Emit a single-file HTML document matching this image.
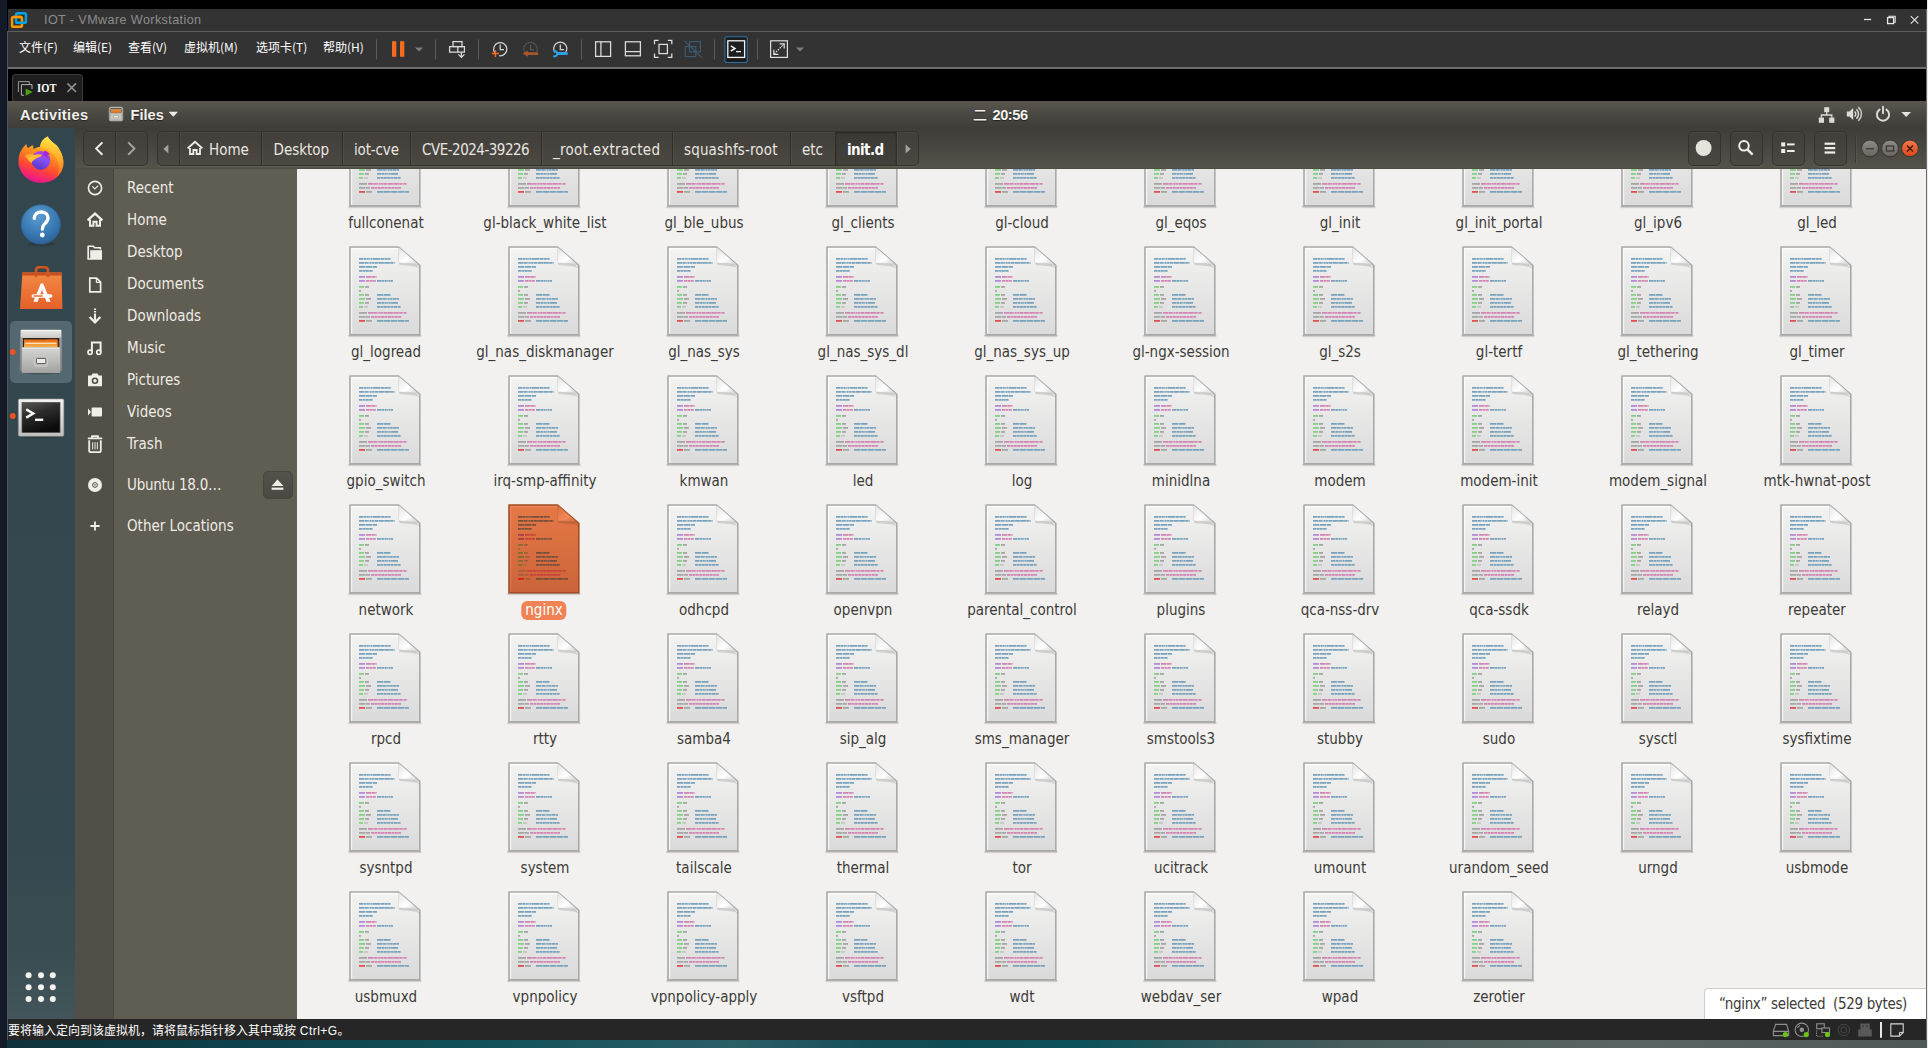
<!DOCTYPE html>
<html lang="zh-CN">
<head>
<meta charset="utf-8">
<title>IOT - VMware Workstation</title>
<style>
*{box-sizing:border-box;margin:0;padding:0}
html,body{width:1928px;height:1048px;overflow:hidden;background:#000}
body{position:relative;font-family:"DejaVu Sans Condensed","Liberation Sans","Noto Sans CJK SC",sans-serif;font-size:15px;color:#3c3b37}
.abs{position:absolute}
#lstrip{left:0;top:0;width:7px;height:1048px;background:#141a27}
#lborder{left:7px;top:31px;width:1px;height:1009px;background:#555}
#rcol1{left:1926px;top:9px;width:1px;height:1031px;background:#6b6b6b}
#rcol2{left:1927px;top:0;width:1px;height:1048px;background:#e9e9e9}
#wall{left:7px;top:1040px;width:1921px;height:8px;background:linear-gradient(90deg,#10323a 0%,#0c3f49 10%,#135059 25%,#2a5f68 38%,#164e57 45%,#0e4a53 50%,#0b525a 56%,#29565a 62%,#485b5b 70%,#5a6563 85%,#4f5856 100%)}
/* vmware chrome */
#vtitle{left:8px;top:9px;width:1918px;height:22px;background:#333}
#vtitle .t{position:absolute;left:36px;top:0;line-height:22px;font-family:"Liberation Sans","Noto Sans CJK SC",sans-serif;font-size:12.6px;color:#8c8c8c;letter-spacing:.4px}
#vline1{left:8px;top:31px;width:1918px;height:1px;background:#5e5e5e}
#vmenu{left:8px;top:32px;width:1918px;height:35px;background:#333}
#vline2{left:7px;top:67px;width:1919px;height:2px;background:#6d6d6d}
.mi{position:absolute;top:0;line-height:30.5px;font-family:"Noto Sans CJK SC","Liberation Sans",sans-serif;font-size:12px;color:#fff;white-space:nowrap}
.vsep{position:absolute;top:7px;width:1px;height:21px;background:#5a5a5a}
#vtab{left:12px;top:74px;width:71px;height:28px;background:#1e1e1e;border:1px solid #3b3b3b;border-bottom:none;border-radius:4px 4px 0 0}
#vtab .n{position:absolute;left:24px;top:5px;transform:scaleX(.84);transform-origin:0 0;font-family:"Liberation Serif","Noto Serif CJK SC",serif;font-weight:bold;font-size:12.5px;line-height:16px;color:#fff;letter-spacing:.2px}
#vstatus{left:8px;top:1019px;width:1918px;height:21px;background:#262626}
#vstatus .t{position:absolute;left:0;top:0;line-height:24px;font-family:"Liberation Sans","Noto Sans CJK SC",sans-serif;font-size:12px;color:#fff;white-space:nowrap}
/* guest */
#guest{left:8px;top:101px;width:1918px;height:918px;background:#f2f1f0;overflow:hidden}
#gtop{left:0;top:0;width:1918px;height:27px;background:linear-gradient(#5a574f,#4a4842 50%,#3f3d38)}
#gtop .b{position:absolute;top:0;line-height:29px;font-family:'Liberation Sans','Noto Sans CJK SC',sans-serif;font-weight:bold;font-size:14.6px;letter-spacing:.35px;color:#f2f1ee;white-space:nowrap;text-shadow:0 1px 1px rgba(0,0,0,.5)}
#dock{left:0;top:27px;width:67px;height:891px;background:linear-gradient(#33464e 0,#34484f 80%,#394c52 92%,#43555a 100%)}
#hbar{left:67px;top:27px;width:1851px;height:41px;z-index:2;background:linear-gradient(#3f3d38,#46443e 35%,#55524a 97%,#4b4942)}
.hbtn{position:absolute;top:3px;height:35px;border:1px solid #33322d;border-radius:5px;background:linear-gradient(#423f3b,#4b4842);box-shadow:inset 0 1px 0 rgba(255,255,255,.05),0 1px 0 rgba(255,255,255,.07)}
.pb{position:absolute;top:0;height:33px;line-height:36px;color:#e8e6e1;font-size:15px;white-space:nowrap;border-left:1px solid #2f2e2a;box-shadow:inset 1px 0 0 rgba(255,255,255,.05)}
.pb span{position:absolute;top:0}
#sideic{left:67px;top:67px;width:39px;height:851px;background:#514f48;border-right:1px solid #46453e}
#side{left:106px;top:67px;width:183px;height:851px;background:#605d52}
#sideborder{left:289px;top:67px;width:1px;height:851px;background:#c6c5c1}
.si{position:absolute;left:13px;height:20px;line-height:23px;color:#edebe6;font-size:15px;white-space:nowrap}
.sic{position:absolute;left:10px;width:18px;height:18px}
#content{position:absolute;left:289px;top:67px;width:1629px;height:851px;background:#f2f1f0;overflow:hidden}
.f{position:absolute;width:150px;height:125px;text-align:center}
.f .ic{position:absolute;left:35px;top:-2px}
.f .lb{position:absolute;left:1px;width:150px;top:95px;line-height:22px;font-size:15px;color:#3c3b37;white-space:nowrap}
.f.sel .lb{left:auto;width:auto}
.f.sel .lb{left:50%;transform:translateX(-50%);background:#ef8355;color:#fff;border-radius:6px;padding:0 4px;height:19px;line-height:19px;top:96.5px}
#floatbar{position:absolute;right:0;bottom:0;width:222px;height:31px;background:#fff;border:1px solid #cfcdc8;border-right:none;border-bottom:none;border-radius:4px 0 0 0;line-height:30px;padding-left:14px;font-size:15px;color:#3c3b37;white-space:nowrap;letter-spacing:-.35px}
</style>
</head>
<body>
<svg width="0" height="0" style="position:absolute"><defs><symbol id="doc" viewBox="0 0 80 98">
<linearGradient id="docg" x1="0" y1="0" x2="0" y2="1"><stop offset="0" stop-color="#f3f3f2"/><stop offset="1" stop-color="#dadada"/></linearGradient>
<linearGradient id="docf" x1="0" y1="0" x2="1" y2="1"><stop offset="0" stop-color="#e4e4e4"/><stop offset=".55" stop-color="#ffffff"/><stop offset="1" stop-color="#c9c9c9"/></linearGradient>
<linearGradient id="docs" x1="0" y1="0" x2="0" y2="1"><stop offset="0" stop-color="#000" stop-opacity=".32"/><stop offset="1" stop-color="#000" stop-opacity="0"/></linearGradient>
<rect x="3.4" y="90.8" width="73" height="3" rx="1.2" fill="url(#docs)"/>
<path d="M5 3H53.6L74.8 21.4V90.8H5Z" fill="url(#docg)" stroke="#a9a9a9" stroke-width="1.6" stroke-linejoin="round"/>
<path d="M6 4H53.2V5.4H7.2V89.8H6Z" fill="#fff" opacity=".7"/>
<path d="M53.8 3.6C53.6 9 53.6 14 53.5 17.4C53.5 19 54.2 19.6 55.6 19.6C62 19.6 69 20.4 74.6 22.6Z" fill="#000" opacity=".13" transform="translate(.5 1.7)"/>
<path d="M53.8 3.2C53.6 9 53.6 14 53.4 17C53.4 18.6 54.2 19 55.6 19C62 19 69 19.8 74.6 21.4Z" fill="url(#docf)" stroke="#a9a9a9" stroke-width=".5" stroke-opacity=".5"/>
<path d="M14 14.9H46" stroke="#78a2bd" stroke-width="1.8" stroke-dasharray="4 .4 3 .4 2 .4 1 .4 2 .4 7 .4"/><path d="M14 18.9H50" stroke="#78a2bd" stroke-width="1.8" stroke-dasharray="5.5 .4 3 .4 1 .4 2 .4 2 .4 4 .4 5 .4"/><path d="M14 22.9H32" stroke="#78a2bd" stroke-width="1.8" stroke-dasharray="6 .5 7 .5"/><path d="M14 26.9H28" stroke="#78a2bd" stroke-width="1.8" stroke-dasharray="3 .4 3 .4 3 .4"/><path d="M14 32.9H20" stroke="#b38bd8" stroke-width="1.8" stroke-dasharray="none"/><path d="M21 32.9H32" stroke="#d484b4" stroke-width="1.8" stroke-dasharray="5.5 .4 3 .4 1 .4 2 .4 2 .4 4 .4 5 .4"/><path d="M14 36.9H20" stroke="#b38bd8" stroke-width="1.8" stroke-dasharray="none"/><path d="M21 36.9H31" stroke="#d484b4" stroke-width="1.8" stroke-dasharray="3 .4 3 .4 3 .4"/><path d="M32 36.9H48" stroke="#78a2bd" stroke-width="1.8" stroke-dasharray="4 .4 3 .4 2 .4 1 .4 2 .4 7 .4"/><path d="M14 42.9H19" stroke="#84d084" stroke-width="1.8" stroke-dasharray="none"/><path d="M20 42.9H24" stroke="#a6a6a6" stroke-width="1.8" stroke-dasharray="none"/><path d="M14 46.9H16" stroke="#a6a6a6" stroke-width="1.8" stroke-dasharray="none"/><path d="M14 50.9H19" stroke="#84d084" stroke-width="1.8" stroke-dasharray="none"/><path d="M20 50.9H24" stroke="#a6a6a6" stroke-width="1.8" stroke-dasharray="none"/><path d="M32 50.9H46" stroke="#78a2bd" stroke-width="1.8" stroke-dasharray="6 .5 7 .5"/><path d="M14 54.9H20" stroke="#84d084" stroke-width="1.8" stroke-dasharray="none"/><path d="M21 54.9H26" stroke="#a6a6a6" stroke-width="1.8" stroke-dasharray="none"/><path d="M32 54.9H54" stroke="#78a2bd" stroke-width="1.8" stroke-dasharray="5.5 .4 3 .4 1 .4 2 .4 2 .4 4 .4 5 .4"/><path d="M14 58.9H19" stroke="#84d084" stroke-width="1.8" stroke-dasharray="none"/><path d="M20 58.9H24" stroke="#a6a6a6" stroke-width="1.8" stroke-dasharray="none"/><path d="M32 58.9H53" stroke="#78a2bd" stroke-width="1.8" stroke-dasharray="4 .4 3 .4 2 .4 1 .4 2 .4 7 .4"/><path d="M14 62.9H18" stroke="#84d084" stroke-width="1.8" stroke-dasharray="none"/><path d="M19 62.9H23" stroke="#c6c6c6" stroke-width="1.8" stroke-dasharray="none"/><path d="M32 62.9H56" stroke="#78a2bd" stroke-width="1.8" stroke-dasharray="3 .4 3 .4 3 .4"/><path d="M14 68.9H22" stroke="#a6a6a6" stroke-width="1.8" stroke-dasharray="none"/><path d="M23 68.9H62" stroke="#d484b4" stroke-width="1.8" stroke-dasharray="5.5 .4 3 .4 1 .4 2 .4 2 .4 4 .4 5 .4"/><path d="M14 72.9H25" stroke="#a6a6a6" stroke-width="1.8" stroke-dasharray="6 .5 7 .5"/><path d="M26 72.9H56" stroke="#d484b4" stroke-width="1.8" stroke-dasharray="3 .4 3 .4 3 .4"/><path d="M14 76.9H20" stroke="#de5252" stroke-width="1.8" stroke-dasharray="none"/><path d="M21 76.9H27" stroke="#a6a6a6" stroke-width="1.8" stroke-dasharray="none"/><path d="M32 76.9H64" stroke="#78a2bd" stroke-width="1.8" stroke-dasharray="6 .5 7 .5"/>
</symbol><symbol id="docsel" viewBox="0 0 80 98">
<linearGradient id="docselg" x1="0" y1="0" x2="0" y2="1"><stop offset="0" stop-color="#e67846"/><stop offset="1" stop-color="#cb643a"/></linearGradient>
<linearGradient id="docself" x1="0" y1="0" x2="1" y2="1"><stop offset="0" stop-color="#d96a3a"/><stop offset=".55" stop-color="#f08a5a"/><stop offset="1" stop-color="#c25a2e"/></linearGradient>
<linearGradient id="docsels" x1="0" y1="0" x2="0" y2="1"><stop offset="0" stop-color="#000" stop-opacity=".32"/><stop offset="1" stop-color="#000" stop-opacity="0"/></linearGradient>
<rect x="3.4" y="90.8" width="73" height="3" rx="1.2" fill="url(#docsels)"/>
<path d="M5 3H53.6L74.8 21.4V90.8H5Z" fill="url(#docselg)" stroke="#a54e25" stroke-width="1.6" stroke-linejoin="round"/>
<path d="M6 4H53.2V5.4H7.2V89.8H6Z" fill="#fff" opacity=".12"/>
<path d="M53.8 3.6C53.6 9 53.6 14 53.5 17.4C53.5 19 54.2 19.6 55.6 19.6C62 19.6 69 20.4 74.6 22.6Z" fill="#000" opacity=".13" transform="translate(.5 1.7)"/>
<path d="M53.8 3.2C53.6 9 53.6 14 53.4 17C53.4 18.6 54.2 19 55.6 19C62 19 69 19.8 74.6 21.4Z" fill="url(#docself)" stroke="#a54e25" stroke-width=".5" stroke-opacity=".5"/>
<path d="M14 14.9H46" stroke="#76503a" stroke-width="1.8" stroke-dasharray="4 .4 3 .4 2 .4 1 .4 2 .4 7 .4"/><path d="M14 18.9H50" stroke="#76503a" stroke-width="1.8" stroke-dasharray="5.5 .4 3 .4 1 .4 2 .4 2 .4 4 .4 5 .4"/><path d="M14 22.9H32" stroke="#76503a" stroke-width="1.8" stroke-dasharray="6 .5 7 .5"/><path d="M14 26.9H28" stroke="#76503a" stroke-width="1.8" stroke-dasharray="3 .4 3 .4 3 .4"/><path d="M14 32.9H20" stroke="#a6404c" stroke-width="1.8" stroke-dasharray="none"/><path d="M21 32.9H32" stroke="#c9423a" stroke-width="1.8" stroke-dasharray="5.5 .4 3 .4 1 .4 2 .4 2 .4 4 .4 5 .4"/><path d="M14 36.9H20" stroke="#a6404c" stroke-width="1.8" stroke-dasharray="none"/><path d="M21 36.9H31" stroke="#c9423a" stroke-width="1.8" stroke-dasharray="3 .4 3 .4 3 .4"/><path d="M32 36.9H48" stroke="#76503a" stroke-width="1.8" stroke-dasharray="4 .4 3 .4 2 .4 1 .4 2 .4 7 .4"/><path d="M14 42.9H19" stroke="#81702b" stroke-width="1.8" stroke-dasharray="none"/><path d="M20 42.9H24" stroke="#a6603e" stroke-width="1.8" stroke-dasharray="none"/><path d="M14 46.9H16" stroke="#a6603e" stroke-width="1.8" stroke-dasharray="none"/><path d="M14 50.9H19" stroke="#81702b" stroke-width="1.8" stroke-dasharray="none"/><path d="M20 50.9H24" stroke="#a6603e" stroke-width="1.8" stroke-dasharray="none"/><path d="M32 50.9H46" stroke="#76503a" stroke-width="1.8" stroke-dasharray="6 .5 7 .5"/><path d="M14 54.9H20" stroke="#81702b" stroke-width="1.8" stroke-dasharray="none"/><path d="M21 54.9H26" stroke="#a6603e" stroke-width="1.8" stroke-dasharray="none"/><path d="M32 54.9H54" stroke="#76503a" stroke-width="1.8" stroke-dasharray="5.5 .4 3 .4 1 .4 2 .4 2 .4 4 .4 5 .4"/><path d="M14 58.9H19" stroke="#81702b" stroke-width="1.8" stroke-dasharray="none"/><path d="M20 58.9H24" stroke="#a6603e" stroke-width="1.8" stroke-dasharray="none"/><path d="M32 58.9H53" stroke="#76503a" stroke-width="1.8" stroke-dasharray="4 .4 3 .4 2 .4 1 .4 2 .4 7 .4"/><path d="M14 62.9H18" stroke="#81702b" stroke-width="1.8" stroke-dasharray="none"/><path d="M19 62.9H23" stroke="#b8683f" stroke-width="1.8" stroke-dasharray="none"/><path d="M32 62.9H56" stroke="#76503a" stroke-width="1.8" stroke-dasharray="3 .4 3 .4 3 .4"/><path d="M14 68.9H22" stroke="#a6603e" stroke-width="1.8" stroke-dasharray="none"/><path d="M23 68.9H62" stroke="#c9423a" stroke-width="1.8" stroke-dasharray="5.5 .4 3 .4 1 .4 2 .4 2 .4 4 .4 5 .4"/><path d="M14 72.9H25" stroke="#a6603e" stroke-width="1.8" stroke-dasharray="6 .5 7 .5"/><path d="M26 72.9H56" stroke="#c9423a" stroke-width="1.8" stroke-dasharray="3 .4 3 .4 3 .4"/><path d="M14 76.9H20" stroke="#d3210f" stroke-width="1.8" stroke-dasharray="none"/><path d="M21 76.9H27" stroke="#a6603e" stroke-width="1.8" stroke-dasharray="none"/><path d="M32 76.9H64" stroke="#76503a" stroke-width="1.8" stroke-dasharray="6 .5 7 .5"/>
</symbol></defs></svg>
<div id="lstrip" class="abs"></div>
<div id="wall" class="abs"></div>
<div id="rcol2" class="abs"></div>
<div id="vtitle" class="abs">
<svg class="abs" style="left:0;top:0" width="30" height="22" viewBox="0 0 30 22" fill="none" stroke-width="2.5">
<rect x="4.05" y="7.95" width="9.9" height="9.9" rx="1.6" stroke="#ff9800"/>
<rect x="8.05" y="4.15" width="9.9" height="9.7" rx="1.6" stroke="#00a4e4"/>
<path d="M5.5 7.95H13.5" stroke="#ff9800"/>
</svg>
<span class="t">IOT - VMware Workstation</span>
<svg class="abs" style="left:1850px;top:0" width="68" height="22" viewBox="0 0 68 22" fill="none" stroke="#e6e6e6" stroke-width="1.1">
<path d="M6 10.5H13.2" stroke-width="1.3"/>
<rect x="29.6" y="8.6" width="6" height="6" stroke-width="1.3"/><path d="M31 8.3V7.2H37.2V13.2H36" stroke-width="1.1"/>
<path d="M52.8 7.1L60.3 14.6M60.3 7.1L52.8 14.6" stroke-width="1.1"/>
</svg>
</div>
<div id="vline1" class="abs"></div>
<div id="vmenu" class="abs">
<span class="mi" style="left:11px">文件(F)</span>
<span class="mi" style="left:65px">编辑(E)</span>
<span class="mi" style="left:120px">查看(V)</span>
<span class="mi" style="left:176px">虚拟机(M)</span>
<span class="mi" style="left:248px">选项卡(T)</span>
<span class="mi" style="left:315px">帮助(H)</span>
<svg class="abs" style="left:0;top:0" width="820" height="35" viewBox="0 0 820 35" fill="none">
<g stroke="#5c5c5c" stroke-width="1"><path d="M368.5 7.5V27.5M427.5 7.5V27.5M470.5 7.5V27.5M573.5 7.5V27.5M706.5 7.5V27.5M749.5 7.5V27.5"/></g>
<rect x="384" y="9.2" width="4.3" height="15.6" fill="#f36b1c"/><rect x="392" y="9.2" width="4.3" height="15.6" fill="#f36b1c"/>
<path d="M407 15.4H415L411 19.6Z" fill="#7d7d7d"/>
<!-- send cad -->
<g stroke="#dcdcdc" stroke-width="1.25"><rect x="445" y="9.6" width="9" height="5"/><path d="M449.8 14.6V20.2M441.6 14.6H456.4V20.2H441.6Z"/><path d="M453.4 20.2V25.2M450.4 22.4L453.4 25.4L456.4 22.4"/></g>
<!-- snapshots -->
<g stroke="#d4d4d4" stroke-width="1.25"><path d="M486.6 20.6A6.6 6.6 0 1 1 491.2 23.7"/><path d="M492.2 12.6V17.6H496"/></g>
<path d="M483.9 21.6H490.9M487.4 18.2V25" stroke="#f36b1c" stroke-width="1.5"/>
<g stroke="#595959" stroke-width="1.2"><path d="M517 20.6A6.6 6.6 0 1 1 528 20.6" stroke-dasharray="2.2 .5"/><path d="M522.5 12.8V17.6H526"/></g>
<path d="M514.8 21.6L519.8 18.6V20.2H530.1V23.1H519.8V24.7Z" fill="#a9562c"/>
<g stroke="#d4d4d4" stroke-width="1.25"><path d="M546.9 20.4A6.6 6.6 0 1 1 557.7 20.4"/><path d="M552.3 12.6V17.6H556"/></g>
<rect x="548.4" y="20" width="11.6" height="3" rx="1.5" fill="#2b9ee4"/><path d="M545.3 19.5A2.6 2.6 0 1 1 545.3 23.9" fill="none" stroke="#2b9ee4" stroke-width="2.1"/>
<!-- layouts -->
<g stroke="#dedede" stroke-width="1.25"><rect x="587.6" y="9.8" width="15" height="14.6"/><path d="M592.9 9.8V24.4"/>
<rect x="617.4" y="9.8" width="15" height="14"/><path d="M617.4 19.6H632.4"/>
<path d="M646.5 12.2V8.4H650.6M659.8 8.4H663.8V12.2M663.8 21.6V25.4H659.8M650.6 25.4H646.5V21.6"/><rect x="651" y="12.4" width="8.4" height="9.2"/></g>
<g stroke="#3d5d75" stroke-width="1.1"><rect x="681.4" y="9.6" width="11" height="10.2"/><rect x="677.2" y="14.6" width="10.6" height="10"/><path d="M676.4 8.6L694 25.8"/></g>
<!-- console -->
<rect x="716.9" y="4.7" width="22.4" height="25.8" rx="2" fill="#1d1d1d" stroke="#2e6ea6" stroke-width="1.1"/>
<g stroke="#f2f2f2"><rect x="719.8" y="8.8" width="16.8" height="16.6" stroke-width="1.3"/><path d="M722.8 13.8L727 16.4L722.8 19" stroke-width="1.5"/><path d="M728 19.6H733" stroke-width="1.3"/></g>
<!-- stretch -->
<g stroke="#dedede" stroke-width="1.2"><rect x="762.6" y="8.8" width="16.8" height="16.6"/><path d="M766.2 22L775.8 12.2" stroke-dasharray="1.6 1"/><path d="M771.6 11.8H776.2V16.4M765.8 17.8V22.4H770.4"/></g>
<path d="M788 15.4H796L792 19.6Z" fill="#7d7d7d"/>
</svg>
</div>
<div id="vline2" class="abs"></div>
<div id="lborder" class="abs"></div>
<div id="rcol1" class="abs"></div>
<div id="vtab" class="abs">
<svg class="abs" style="left:2px;top:5px" width="20" height="17" viewBox="0 0 20 17" fill="none"><path d="M3.4 12V1.6H14.2V4.4" stroke="#9a9a9a" stroke-width="1"/><path d="M6.4 15.2V4.6H17V9" stroke="#b4b4b4" stroke-width="1"/><path d="M6.4 15.2H9" stroke="#b4b4b4" stroke-width="1"/><path d="M10.6 8.4L17.8 12.1L10.6 15.8Z" fill="#4ba017"/></svg>
<span class="n">IOT</span>
<svg class="abs" style="left:53px;top:7px" width="12" height="12" viewBox="0 0 12 12"><path d="M1.4 1.4L10 10M10 1.4L1.4 10" stroke="#8e8e8e" stroke-width="1.7"/></svg>
</div>
<div id="vstatus" class="abs"><span class="t">要将输入定向到该虚拟机，请将鼠标指针移入其中或按<span style="letter-spacing:.45px"> Ctrl+G</span>。</span>
<svg class="abs" style="left:1760px;top:-1px" width="150" height="21" viewBox="0 0 150 21" fill="none">
<g stroke="#8f8f8f" stroke-width="1.1">
<path d="M5.4 13.2L7.6 6.4H18.6L20.6 13.2V17.6H5.4ZM5.4 13.4H20.6"/>
<circle cx="33.8" cy="11.8" r="6.7"/><circle cx="33.8" cy="11.8" r="1.7" fill="#8f8f8f"/><path d="M29.4 10A4.8 4.8 0 0 1 32 7.4"/>
<rect x="48.7" y="5.8" width="7.6" height="4.9"/><rect x="53.9" y="10" width="7.6" height="4.6" fill="#262626"/><path d="M48.6 12.4V18.3H56" stroke-dasharray="1.1 1.1"/>
</g>
<g stroke="#474747" stroke-width="1"><circle cx="75.8" cy="12" r="5.7"/><circle cx="75.8" cy="12" r="2.9"/></g>
<path d="M92.4 5.4H101.8V11.4H103.8V18.6H90.2V11.4H92.4Z" fill="#595959"/><path d="M94.6 8H96M98.2 8H99.6" stroke="#262626" stroke-width="1"/>
<path d="M113 4V19.8" stroke="#f4f4f4" stroke-width="1.9"/>
<path d="M122.8 5.9H135.2V14.4L131.4 18.1H122.8Z" stroke="#d8d8d8" stroke-width="1.1"/><path d="M135.2 14.4H131.4V18.1" stroke="#d8d8d8" stroke-width="1"/>
<circle cx="17.4" cy="16.6" r="2.6" fill="#6cc117"/><circle cx="38.3" cy="16.6" r="2.6" fill="#6cc117"/><circle cx="59.5" cy="16.6" r="2.6" fill="#6cc117"/>
</svg>
</div>
<div id="guest" class="abs">
<div id="gtop" class="abs">
<span class="b" style="left:12px">Activities</span>
<svg class="abs" style="left:100px;top:5px" width="16" height="16" viewBox="0 0 16 16"><rect x="1.2" y="1" width="13.6" height="14" rx="1.6" fill="#dcdad5" stroke="#8d8b86" stroke-width=".8"/><rect x="2.4" y="2.2" width="11.2" height="4.6" fill="#3a3935"/><rect x="3" y="3.2" width="10" height="1.6" fill="#f5a34a"/><rect x="3" y="4.8" width="10" height="2" fill="#ea7a2a"/><rect x="2.2" y="7.6" width="11.6" height="6.4" rx=".8" fill="#c9c7c2" stroke="#9a9893" stroke-width=".6"/><rect x="5.6" y="9.4" width="4.8" height="2.4" rx=".5" fill="#f4f3f0" stroke="#8d8b86" stroke-width=".6"/></svg>
<span class="b" style="left:122.5px;letter-spacing:0">Files</span>
<svg class="abs" style="left:160px;top:10px" width="11" height="7" viewBox="0 0 11 7"><path d="M.6 .8H10L5.3 5.8Z" fill="#eeece8"/></svg>
<span class="b" style="left:965px;font-family:'Noto Sans CJK SC','DejaVu Sans Condensed',sans-serif;font-weight:500;font-size:14px;line-height:27px">二</span>
<span class="b" style="left:984.5px;letter-spacing:-.45px">20:56</span>
<svg class="abs" style="left:1806px;top:3px" width="110" height="24" viewBox="0 0 110 24" fill="#dddbd6">
<rect x="10.2" y="3.2" width="5" height="5"/><rect x="4.8" y="13.6" width="5.2" height="5.2"/><rect x="15.2" y="13.6" width="5.2" height="5.2"/><path d="M12.7 8V11M7.4 13.8V11H17.8V13.8" fill="none" stroke="#dddbd6" stroke-width="1.3"/>
<path d="M32.8 7.6H35.4L39.2 4V16L35.4 12.4H32.8Z"/><g fill="none" stroke="#dddbd6" stroke-width="1.5"><path d="M40.6 7.5A3.2 3.2 0 0 1 40.6 12.5"/><path d="M42.4 5.4A6 6 0 0 1 42.4 14.6"/><path d="M44.2 3.2A8.8 8.8 0 0 1 44.2 16.8" opacity=".85"/></g>
<g fill="none" stroke="#dddbd6" stroke-width="1.9" stroke-linecap="round"><path d="M65.6 5.6A6.1 6.1 0 1 0 72.4 5.6"/><path d="M69 2.6V9.2"/></g>
<path d="M87.4 8H97L92.2 13Z" fill="#e6e4df"/>
</svg>
</div>
<div id="dock" class="abs">
<!-- firefox -->
<svg class="abs" style="left:9px;top:6.5px" width="49" height="50" viewBox="0 0 49 50">
<defs><linearGradient id="ffa" x1=".7" y1="0" x2=".35" y2="1"><stop offset="0" stop-color="#fff45a"/><stop offset=".15" stop-color="#ffd530"/><stop offset=".35" stop-color="#ff9a1f"/><stop offset=".55" stop-color="#ff6a28"/><stop offset=".7" stop-color="#ff4636"/><stop offset=".85" stop-color="#f8286a"/><stop offset="1" stop-color="#e01590"/></linearGradient>
<linearGradient id="ffb" x1=".75" y1="0" x2=".3" y2="1"><stop offset="0" stop-color="#b638e4"/><stop offset=".45" stop-color="#8450f4"/><stop offset="1" stop-color="#5535c4"/></linearGradient>
<linearGradient id="ffc" x1="0" y1="0" x2="1" y2=".6"><stop offset="0" stop-color="#ff9a1f"/><stop offset=".5" stop-color="#ffc23a"/><stop offset="1" stop-color="#ffa020"/></linearGradient>
<linearGradient id="ffd" x1=".5" y1="0" x2=".4" y2="1"><stop offset="0" stop-color="#ffe64a"/><stop offset=".5" stop-color="#ffb22a"/><stop offset="1" stop-color="#ff7a2a" stop-opacity=".6"/></linearGradient></defs>
<path d="M30.7 1.4C33 6 38 8.5 40.5 11.3C41.4 12.4 42 13.8 42.3 15C44.5 17.5 46 21 46.6 27C47 35 42 42 35.8 45C32 47 28 47.8 24.6 47.7C20 47.7 15.5 46.8 12.5 44.9C8 42 5 39 4.1 36.5C2 32 1.3 29 1.5 26.2C1.5 23 2 20 3.1 17.8C4.5 14.5 6.5 11.5 9.5 9C9.5 10.5 10 12 11.1 13.1C12.5 12 14 11 16.2 10.3C16 11.5 16.2 13 16.7 14.1C18.5 12.8 21 12 23.2 11.7C23 8 26 3.5 30.7 1.4Z" fill="url(#ffa)"/>
<path d="M30.7 1.6C33 6 38 8.6 40.4 11.4C44 15.6 45.6 20 46.2 26C46.6 32 44 38 40 41.6C42 37 42.6 31 40.6 26C39 21.6 36 18 32 15.6C28 13.4 25 12.4 23.4 11.6C23.2 8 26 3.6 30.7 1.6Z" fill="url(#ffd)" opacity=".85"/>
<circle cx="23.8" cy="25.4" r="9.5" fill="url(#ffb)"/>
<path d="M27.4 15.6C30 16.4 32.6 18.2 33.4 20.8C32 19.6 30.4 19.2 29.2 19.4C30.4 20.4 31.4 22 31.4 23.6C30 21.4 27.6 20 25.4 19.8C26.6 18.6 27.4 17 27.4 15.6Z" fill="#a426d2"/>
<path d="M7.6 20.7C10.8 18.6 14.6 18.6 17.4 20.1C19.6 19.2 22.4 18.8 25.6 19.8C24.4 20.3 23.8 21 23.9 21.7C21 22.3 18.2 23.8 15.8 26C14.9 26.8 14.5 27.4 14.3 28C12.6 26.4 11.2 24.8 10.2 23.4C9.4 22.2 8.6 21.4 7.6 20.7Z" fill="url(#ffc)"/>
</svg>
<!-- help -->
<svg class="abs" style="left:10px;top:74px" width="46" height="48" viewBox="0 0 46 48">
<defs><radialGradient id="hpa" cx=".45" cy=".3" r=".75"><stop offset="0" stop-color="#5a9bd0"/><stop offset=".6" stop-color="#3a7ab4"/><stop offset="1" stop-color="#2a5e94"/></radialGradient></defs>
<ellipse cx="23" cy="42.2" rx="14" ry="2.2" fill="#000" opacity=".14"/>
<circle cx="22.8" cy="22.4" r="19.6" fill="url(#hpa)" stroke="#2e6496" stroke-width=".8"/>
<path d="M16.2 16.4C16.4 12.4 19.2 10 23.2 10C27.4 10 30 12.6 30 16C30 19 28.2 20.6 26.2 22.4C24.8 23.8 24.4 24.8 24.4 27.2" fill="none" stroke="#fff" stroke-width="3.3" stroke-linecap="round"/><circle cx="24.3" cy="33" r="2.4" fill="#fff"/>
</svg>
<!-- software -->
<svg class="abs" style="left:10px;top:136px" width="48" height="48" viewBox="0 0 48 48">
<defs><linearGradient id="swa" x1="0" y1="0" x2="0" y2="1"><stop offset="0" stop-color="#f28a45"/><stop offset="1" stop-color="#e5602a"/></linearGradient></defs>
<path d="M18 12V6.6C18 4.4 19.4 3.2 21.2 3.2H26.8C28.6 3.2 30 4.4 30 6.6V12" fill="none" stroke="#d2541f" stroke-width="2.6"/>
<path d="M4.4 8.6H43.6L44.4 45H2Z" fill="url(#swa)"/><path d="M4.4 8.6H43.6L43.8 11.4H4.2Z" fill="#c8501e"/>
<path d="M18 8.4V13M30 8.4V13" stroke="#d2541f" stroke-width="2.6"/>
<path d="M15.4 37.8L22.8 19.6H25.2L32.6 37.8H28.4L24 25.8L19.6 37.8Z" fill="#fff"/><rect x="13.6" y="30.2" width="20.8" height="3.6" rx="1.8" fill="#fff"/><rect x="15.6" y="31.3" width="9" height="1.4" fill="#e5602a"/>
</svg>
<!-- files active -->
<div class="abs" style="left:2px;top:193px;width:62px;height:62px;border-radius:5px;background:#536870"></div>
<svg class="abs" style="left:10px;top:200px" width="46" height="48" viewBox="0 0 46 48">
<defs><linearGradient id="fla" x1="0" y1="0" x2="0" y2="1"><stop offset="0" stop-color="#ecebe9"/><stop offset=".2" stop-color="#c9c9c6"/><stop offset="1" stop-color="#8f8f8c"/></linearGradient>
<linearGradient id="flb" x1="0" y1="0" x2="0" y2="1"><stop offset="0" stop-color="#d6d6d3"/><stop offset="1" stop-color="#a2a2a0"/></linearGradient>
<linearGradient id="flc" x1="0" y1="0" x2="0" y2="1"><stop offset="0" stop-color="#dd6414"/><stop offset=".45" stop-color="#f08a2a"/><stop offset="1" stop-color="#f7b552"/></linearGradient></defs>
<ellipse cx="23" cy="44.6" rx="20" ry="1.8" fill="#000" opacity=".18"/>
<path d="M2.6 2.6C2.6 2 3 1.7 3.6 1.7H42.4C43 1.7 43.4 2 43.4 2.6L44.2 42.6H1.8Z" fill="url(#fla)"/>
<path d="M3 2.2H43V2.9H3Z" fill="#fff" opacity=".7"/><path d="M2.4 9.6H4.6V42.6H1.9ZM41.6 9.6H43.6L44.2 42.6H41.8Z" fill="#77777a" opacity=".55"/>
<rect x="4.8" y="10" width="36.6" height="9.6" fill="#262522"/>
<rect x="6" y="11.4" width="33.8" height="8" fill="url(#flc)"/><rect x="7.4" y="14.7" width="31" height="1.1" fill="#fdf0dc"/><path d="M29 11.4H38.6L39.8 13V19.4" fill="none" stroke="#c9520e" stroke-width=".8"/>
<path d="M4.2 19.4H41.8L42.4 44.2C42.4 44.7 42 45 41.4 45H4.6C4 45 3.6 44.7 3.6 44.2Z" fill="url(#flb)"/>
<path d="M4.3 19.5H41.7V20.4H4.3Z" fill="#fff" opacity=".75"/>
<rect x="16.2" y="28" width="13.4" height="10.6" rx="2.2" fill="#bcbcb9" stroke="#d4d4d1" stroke-width=".7"/><rect x="18.5" y="30.5" width="9.2" height="5" rx=".8" fill="#ebebe8" stroke="#55544f" stroke-width=".9"/>
</svg>
<!-- terminal -->
<svg class="abs" style="left:9px;top:269px" width="48" height="42" viewBox="0 0 48 42">
<defs><linearGradient id="tma" x1="0" y1="0" x2=".4" y2="1"><stop offset="0" stop-color="#565656"/><stop offset=".45" stop-color="#2c2c2c"/><stop offset="1" stop-color="#0c0c0c"/></linearGradient>
<linearGradient id="tmb" x1="0" y1="0" x2="0" y2="1"><stop offset="0" stop-color="#f2f2f0"/><stop offset="1" stop-color="#bfbfbc"/></linearGradient></defs>
<ellipse cx="24" cy="39.6" rx="22" ry="1.6" fill="#000" opacity=".2"/>
<rect x="1.4" y="2" width="45.4" height="37.2" rx="1.4" fill="url(#tmb)" stroke="#9a9a97" stroke-width=".6"/>
<rect x="5" y="5.5" width="38" height="30" fill="url(#tma)" stroke="#4a4a4a" stroke-width=".7"/>
<path d="M9.2 12.4L16.2 16.5L9.2 20.6" fill="none" stroke="#f4f4f4" stroke-width="2.5"/><rect x="18" y="21.6" width="8.2" height="2.4" fill="#f4f4f4"/>
</svg>
<svg class="abs" style="left:0;top:215px" width="12" height="84" viewBox="0 0 12 84"><circle cx="4.8" cy="9" r="2.9" fill="#e8541e"/><circle cx="4.8" cy="73" r="2.9" fill="#e8541e"/></svg>
<svg class="abs" style="left:14px;top:840px" width="40" height="40" viewBox="0 0 40 40" fill="#f4f3f0"><circle cx="6.6" cy="7.3" r="3"/><circle cx="19" cy="7.3" r="3"/><circle cx="30.8" cy="7.3" r="3"/><circle cx="6.6" cy="19.3" r="3"/><circle cx="19" cy="19.3" r="3"/><circle cx="30.8" cy="19.3" r="3"/><circle cx="6.6" cy="31" r="3"/><circle cx="19" cy="31" r="3"/><circle cx="30.8" cy="31" r="3"/></svg>
</div>
<div id="hbar" class="abs">
<div class="hbtn" style="left:8px;width:65px"><div class="abs" style="left:31px;top:0;width:1px;height:32px;background:#2f2e2a;box-shadow:1px 0 0 rgba(255,255,255,.05)"></div>
<svg class="abs" style="left:0;top:0" width="64" height="32" viewBox="0 0 64 32" fill="none" stroke-width="2"><path d="M18.4 10.4L12.2 16.6L18.4 22.8" stroke="#f0eee9"/><path d="M44.2 10.4L50.4 16.6L44.2 22.8" stroke="#a5a39d"/></svg></div>
<div class="hbtn" style="left:81.5px;width:762px;overflow:hidden">
<svg class="abs" style="left:3.5px;top:10px" width="10" height="14" viewBox="0 0 10 14"><path d="M7.4 2.4V11.6L2.4 7Z" fill="#a5a39d"/></svg>
<div class="pb" style="left:21px;width:82px"><svg class="abs" style="left:6px;top:8px" width="18" height="16" viewBox="0 0 18 16" fill="none" stroke="#f0eee9"><path d="M1.6 8.4L9 1.8L16.4 8.4" stroke-width="1.9"/><path d="M4 8V14H7.4V10H10.6V14H14V8" stroke-width="1.8"/></svg><span style="left:29.5px">Home</span></div>
<div class="pb" style="left:103px;width:81px"><span style="left:12px">Desktop</span></div>
<div class="pb" style="left:184px;width:68px"><span style="left:11.5px;letter-spacing:-.15px">iot-cve</span></div>
<div class="pb" style="left:252px;width:131px"><span style="left:11.5px;letter-spacing:-.5px">CVE-2024-39226</span></div>
<div class="pb" style="left:383px;width:131px"><span style="left:11.5px;letter-spacing:.3px">_root.extracted</span></div>
<div class="pb" style="left:514px;width:118px"><span style="left:11.5px;letter-spacing:.15px">squashfs-root</span></div>
<div class="pb" style="left:632px;width:45px"><span style="left:11.5px">etc</span></div>
<div class="pb" style="left:677px;width:61px;background:linear-gradient(#3b3a35,#42403b);box-shadow:inset 0 1px 2px rgba(0,0,0,.35)"><span style="left:11.5px;font-weight:bold;color:#fff;letter-spacing:-.6px">init.d</span></div>
<div class="pb" style="left:738px;width:24px;border-left-color:#2f2e2a"></div>
<svg class="abs" style="left:745px;top:10px" width="10" height="14" viewBox="0 0 10 14"><path d="M2.6 2.4V11.6L7.6 7Z" fill="#a5a39d"/></svg>
</div>
<div class="hbtn" style="left:1613px;width:33px"><svg class="abs" style="left:-.6px;top:0" width="32" height="32" viewBox="0 0 32 32"><circle cx="15.6" cy="16" r="8" fill="#e6e3dc"/></svg></div>
<div class="hbtn" style="left:1655px;width:33px"><svg class="abs" style="left:-.6px;top:0" width="32" height="32" viewBox="0 0 32 32" fill="none" stroke="#f0eee9"><circle cx="14" cy="13.8" r="4.8" stroke-width="2"/><path d="M17.6 17.6L22.6 22.6" stroke-width="2.4"/></svg></div>
<div class="hbtn" style="left:1697px;width:33px"><svg class="abs" style="left:-.6px;top:0" width="32" height="32" viewBox="0 0 32 32" fill="#f0eee9"><rect x="9.2" y="10.4" width="4" height="4"/><rect x="9.2" y="17" width="4" height="4"/><rect x="15" y="11.4" width="7.6" height="2"/><rect x="15" y="18" width="7.6" height="2"/></svg></div>
<div class="hbtn" style="left:1739px;width:33px"><svg class="abs" style="left:-.6px;top:0" width="32" height="32" viewBox="0 0 32 32" fill="#f0eee9"><rect x="10.6" y="10.6" width="10.6" height="2.2"/><rect x="10.6" y="15" width="10.6" height="2.2"/><rect x="10.6" y="19.4" width="10.6" height="2.2"/></svg></div>
<div class="abs" style="left:1780px;top:7px;width:1px;height:28px;background:#3a3934;box-shadow:1px 0 0 rgba(255,255,255,.06)"></div>
<svg class="abs" style="left:1784px;top:9px" width="62" height="24" viewBox="0 0 62 24">
<defs><linearGradient id="wba" x1="0" y1="0" x2="0" y2="1"><stop offset="0" stop-color="#8f8d85"/><stop offset="1" stop-color="#66645c"/></linearGradient><linearGradient id="wbc" x1="0" y1="0" x2="0" y2="1"><stop offset="0" stop-color="#f37a4c"/><stop offset="1" stop-color="#d9451a"/></linearGradient></defs>
<circle cx="11" cy="11.4" r="8.4" fill="url(#wba)" stroke="#35342f" stroke-width="1"/><path d="M7 11.8H15" stroke="#3a3934" stroke-width="1.3"/>
<circle cx="31" cy="11.4" r="8.4" fill="url(#wba)" stroke="#35342f" stroke-width="1"/><rect x="27.4" y="9" width="7.2" height="5" fill="none" stroke="#3a3934" stroke-width="1.3"/>
<circle cx="51" cy="11.4" r="8.4" fill="url(#wbc)" stroke="#35342f" stroke-width="1"/><path d="M48 8.6L54 14.6M54 8.6L48 14.6" stroke="#3a1a0c" stroke-width="1.4"/>
</svg>
</div>
<div id="sideic" class="abs">
<svg class="abs" style="left:1px;top:1px" width="38" height="380" viewBox="0 0 38 380" fill="none" stroke="#f0eee9" stroke-width="1.6">
<circle cx="19" cy="19" r="6.6"/><path d="M16.4 17.4L18.8 20L22.2 16.6" stroke-width="1.2"/>
<path d="M11.6 51.4L19 44.6L26.4 51.4" stroke-width="2.2"/><path d="M14 50.6V56.8H17.4V52.8H20.6V56.8H24V50.6" stroke-width="2"/>
<g transform="translate(0 .8)"><path d="M12.2 76.4H17.4L18.6 78H24.4V79.6" stroke-width="1.5"/><path d="M12.2 76V89.2" stroke-width="1.7"/><rect x="14.2" y="80.4" width="11.8" height="8.8" fill="#f0eee9" stroke="none"/><path d="M11.4 89.2H26" stroke-width="1.5"/></g>
<g transform="translate(0 1)"><path d="M13.8 108.2H20.6L24.6 112.2V121.8H13.8Z" stroke-width="1.7"/><path d="M20.4 108.4V112.4H24.4" stroke-width="1.2"/></g>
<g transform="translate(0 1.4)"><path d="M19 138V150.4" stroke-width="2.1" stroke-dasharray="1.5 1.1 1.5 1.1 9 0"/><path d="M13.6 146.6L19 152L24.4 146.6" stroke-width="2.3"/></g>
<path d="M15.9 182.6V173.4H24.6V182.6" stroke-width="2"/><circle cx="14.1" cy="183.2" r="2.1" stroke-width="1.7"/><circle cx="22.8" cy="183.2" r="2.1" stroke-width="1.7"/>
<path d="M12 206.6H15.4L16.6 204.6H21.4L22.6 206.6H26V217.2H12Z" fill="#f0eee9" stroke="none"/><circle cx="19" cy="211.8" r="3.3" fill="#4f4e46" stroke="none"/><circle cx="19" cy="211.8" r="1.7" fill="#f0eee9" stroke="none"/>
<rect x="15.6" y="238.4" width="10.4" height="9.2" rx="1" fill="#f0eee9" stroke="none"/><path d="M12 239.4L15 243L12 246.6Z" fill="#f0eee9" stroke="none"/>
<path d="M11.8 269.4H26.2M16 269V267.2H22V269" stroke-width="1.7"/><path d="M13.2 271.2V281.4C13.2 282.6 13.9 283.2 15 283.2H23C24.1 283.2 24.8 282.6 24.8 281.4V271.2" stroke-width="1.8"/><path d="M16.7 273.2V280.4M19 273.2V280.4M21.3 273.2V280.4" stroke-width="1"/>
<circle cx="19" cy="316" r="7" fill="#f0eee9" stroke="none"/><circle cx="19" cy="316" r="2.4" stroke="#4f4e46" stroke-width="1"/><circle cx="19" cy="316" r=".8" fill="#4f4e46" stroke="none"/>
<path d="M19 352.4V361.6M14.4 357H23.6" stroke-width="1.8"/>
</svg>
</div>
<div id="side" class="abs">
<span class="si" style="top:9px">Recent</span>
<span class="si" style="top:41px">Home</span>
<span class="si" style="top:73px">Desktop</span>
<span class="si" style="top:105px">Documents</span>
<span class="si" style="top:137px">Downloads</span>
<span class="si" style="top:169px">Music</span>
<span class="si" style="top:201px">Pictures</span>
<span class="si" style="top:233px">Videos</span>
<span class="si" style="top:265px">Trash</span>
<span class="si" style="top:306px;letter-spacing:-.25px">Ubuntu 18.0…</span>
<span class="si" style="top:347px">Other Locations</span>
<div class="abs" style="left:149px;top:303px;width:30px;height:28px;border:1px solid #47463f;border-radius:5px;background:linear-gradient(#535148,#4b4942)"><svg class="abs" style="left:6px;top:6px" width="15" height="14" viewBox="0 0 15 14" fill="#f0eee9"><path d="M7.5 1.6L13.4 8H1.6Z"/><rect x="1.6" y="9.6" width="11.8" height="2.2"/></svg></div>
</div>
<div id="sideborder" class="abs"></div>
<div id="content">
<div class="f" style="left:13px;top:-51px"><svg class="ic" width="80" height="98" viewBox="0 0 80 98"><use href="#doc"/></svg><span class="lb">fullconenat</span></div>
<div class="f" style="left:172px;top:-51px"><svg class="ic" width="80" height="98" viewBox="0 0 80 98"><use href="#doc"/></svg><span class="lb">gl-black_white_list</span></div>
<div class="f" style="left:331px;top:-51px"><svg class="ic" width="80" height="98" viewBox="0 0 80 98"><use href="#doc"/></svg><span class="lb">gl_ble_ubus</span></div>
<div class="f" style="left:490px;top:-51px"><svg class="ic" width="80" height="98" viewBox="0 0 80 98"><use href="#doc"/></svg><span class="lb">gl_clients</span></div>
<div class="f" style="left:649px;top:-51px"><svg class="ic" width="80" height="98" viewBox="0 0 80 98"><use href="#doc"/></svg><span class="lb">gl-cloud</span></div>
<div class="f" style="left:808px;top:-51px"><svg class="ic" width="80" height="98" viewBox="0 0 80 98"><use href="#doc"/></svg><span class="lb">gl_eqos</span></div>
<div class="f" style="left:967px;top:-51px"><svg class="ic" width="80" height="98" viewBox="0 0 80 98"><use href="#doc"/></svg><span class="lb">gl_init</span></div>
<div class="f" style="left:1126px;top:-51px"><svg class="ic" width="80" height="98" viewBox="0 0 80 98"><use href="#doc"/></svg><span class="lb">gl_init_portal</span></div>
<div class="f" style="left:1285px;top:-51px"><svg class="ic" width="80" height="98" viewBox="0 0 80 98"><use href="#doc"/></svg><span class="lb">gl_ipv6</span></div>
<div class="f" style="left:1444px;top:-51px"><svg class="ic" width="80" height="98" viewBox="0 0 80 98"><use href="#doc"/></svg><span class="lb">gl_led</span></div>
<div class="f" style="left:13px;top:78px"><svg class="ic" width="80" height="98" viewBox="0 0 80 98"><use href="#doc"/></svg><span class="lb">gl_logread</span></div>
<div class="f" style="left:172px;top:78px"><svg class="ic" width="80" height="98" viewBox="0 0 80 98"><use href="#doc"/></svg><span class="lb">gl_nas_diskmanager</span></div>
<div class="f" style="left:331px;top:78px"><svg class="ic" width="80" height="98" viewBox="0 0 80 98"><use href="#doc"/></svg><span class="lb">gl_nas_sys</span></div>
<div class="f" style="left:490px;top:78px"><svg class="ic" width="80" height="98" viewBox="0 0 80 98"><use href="#doc"/></svg><span class="lb">gl_nas_sys_dl</span></div>
<div class="f" style="left:649px;top:78px"><svg class="ic" width="80" height="98" viewBox="0 0 80 98"><use href="#doc"/></svg><span class="lb">gl_nas_sys_up</span></div>
<div class="f" style="left:808px;top:78px"><svg class="ic" width="80" height="98" viewBox="0 0 80 98"><use href="#doc"/></svg><span class="lb">gl-ngx-session</span></div>
<div class="f" style="left:967px;top:78px"><svg class="ic" width="80" height="98" viewBox="0 0 80 98"><use href="#doc"/></svg><span class="lb">gl_s2s</span></div>
<div class="f" style="left:1126px;top:78px"><svg class="ic" width="80" height="98" viewBox="0 0 80 98"><use href="#doc"/></svg><span class="lb">gl-tertf</span></div>
<div class="f" style="left:1285px;top:78px"><svg class="ic" width="80" height="98" viewBox="0 0 80 98"><use href="#doc"/></svg><span class="lb">gl_tethering</span></div>
<div class="f" style="left:1444px;top:78px"><svg class="ic" width="80" height="98" viewBox="0 0 80 98"><use href="#doc"/></svg><span class="lb">gl_timer</span></div>
<div class="f" style="left:13px;top:207px"><svg class="ic" width="80" height="98" viewBox="0 0 80 98"><use href="#doc"/></svg><span class="lb">gpio_switch</span></div>
<div class="f" style="left:172px;top:207px"><svg class="ic" width="80" height="98" viewBox="0 0 80 98"><use href="#doc"/></svg><span class="lb">irq-smp-affinity</span></div>
<div class="f" style="left:331px;top:207px"><svg class="ic" width="80" height="98" viewBox="0 0 80 98"><use href="#doc"/></svg><span class="lb">kmwan</span></div>
<div class="f" style="left:490px;top:207px"><svg class="ic" width="80" height="98" viewBox="0 0 80 98"><use href="#doc"/></svg><span class="lb">led</span></div>
<div class="f" style="left:649px;top:207px"><svg class="ic" width="80" height="98" viewBox="0 0 80 98"><use href="#doc"/></svg><span class="lb">log</span></div>
<div class="f" style="left:808px;top:207px"><svg class="ic" width="80" height="98" viewBox="0 0 80 98"><use href="#doc"/></svg><span class="lb">minidlna</span></div>
<div class="f" style="left:967px;top:207px"><svg class="ic" width="80" height="98" viewBox="0 0 80 98"><use href="#doc"/></svg><span class="lb">modem</span></div>
<div class="f" style="left:1126px;top:207px"><svg class="ic" width="80" height="98" viewBox="0 0 80 98"><use href="#doc"/></svg><span class="lb">modem-init</span></div>
<div class="f" style="left:1285px;top:207px"><svg class="ic" width="80" height="98" viewBox="0 0 80 98"><use href="#doc"/></svg><span class="lb">modem_signal</span></div>
<div class="f" style="left:1444px;top:207px"><svg class="ic" width="80" height="98" viewBox="0 0 80 98"><use href="#doc"/></svg><span class="lb">mtk-hwnat-post</span></div>
<div class="f" style="left:13px;top:336px"><svg class="ic" width="80" height="98" viewBox="0 0 80 98"><use href="#doc"/></svg><span class="lb">network</span></div>
<div class="f sel" style="left:172px;top:336px"><svg class="ic" width="80" height="98" viewBox="0 0 80 98"><use href="#docsel"/></svg><span class="lb">nginx</span></div>
<div class="f" style="left:331px;top:336px"><svg class="ic" width="80" height="98" viewBox="0 0 80 98"><use href="#doc"/></svg><span class="lb">odhcpd</span></div>
<div class="f" style="left:490px;top:336px"><svg class="ic" width="80" height="98" viewBox="0 0 80 98"><use href="#doc"/></svg><span class="lb">openvpn</span></div>
<div class="f" style="left:649px;top:336px"><svg class="ic" width="80" height="98" viewBox="0 0 80 98"><use href="#doc"/></svg><span class="lb">parental_control</span></div>
<div class="f" style="left:808px;top:336px"><svg class="ic" width="80" height="98" viewBox="0 0 80 98"><use href="#doc"/></svg><span class="lb">plugins</span></div>
<div class="f" style="left:967px;top:336px"><svg class="ic" width="80" height="98" viewBox="0 0 80 98"><use href="#doc"/></svg><span class="lb">qca-nss-drv</span></div>
<div class="f" style="left:1126px;top:336px"><svg class="ic" width="80" height="98" viewBox="0 0 80 98"><use href="#doc"/></svg><span class="lb">qca-ssdk</span></div>
<div class="f" style="left:1285px;top:336px"><svg class="ic" width="80" height="98" viewBox="0 0 80 98"><use href="#doc"/></svg><span class="lb">relayd</span></div>
<div class="f" style="left:1444px;top:336px"><svg class="ic" width="80" height="98" viewBox="0 0 80 98"><use href="#doc"/></svg><span class="lb">repeater</span></div>
<div class="f" style="left:13px;top:465px"><svg class="ic" width="80" height="98" viewBox="0 0 80 98"><use href="#doc"/></svg><span class="lb">rpcd</span></div>
<div class="f" style="left:172px;top:465px"><svg class="ic" width="80" height="98" viewBox="0 0 80 98"><use href="#doc"/></svg><span class="lb">rtty</span></div>
<div class="f" style="left:331px;top:465px"><svg class="ic" width="80" height="98" viewBox="0 0 80 98"><use href="#doc"/></svg><span class="lb">samba4</span></div>
<div class="f" style="left:490px;top:465px"><svg class="ic" width="80" height="98" viewBox="0 0 80 98"><use href="#doc"/></svg><span class="lb">sip_alg</span></div>
<div class="f" style="left:649px;top:465px"><svg class="ic" width="80" height="98" viewBox="0 0 80 98"><use href="#doc"/></svg><span class="lb">sms_manager</span></div>
<div class="f" style="left:808px;top:465px"><svg class="ic" width="80" height="98" viewBox="0 0 80 98"><use href="#doc"/></svg><span class="lb">smstools3</span></div>
<div class="f" style="left:967px;top:465px"><svg class="ic" width="80" height="98" viewBox="0 0 80 98"><use href="#doc"/></svg><span class="lb">stubby</span></div>
<div class="f" style="left:1126px;top:465px"><svg class="ic" width="80" height="98" viewBox="0 0 80 98"><use href="#doc"/></svg><span class="lb">sudo</span></div>
<div class="f" style="left:1285px;top:465px"><svg class="ic" width="80" height="98" viewBox="0 0 80 98"><use href="#doc"/></svg><span class="lb">sysctl</span></div>
<div class="f" style="left:1444px;top:465px"><svg class="ic" width="80" height="98" viewBox="0 0 80 98"><use href="#doc"/></svg><span class="lb">sysfixtime</span></div>
<div class="f" style="left:13px;top:594px"><svg class="ic" width="80" height="98" viewBox="0 0 80 98"><use href="#doc"/></svg><span class="lb">sysntpd</span></div>
<div class="f" style="left:172px;top:594px"><svg class="ic" width="80" height="98" viewBox="0 0 80 98"><use href="#doc"/></svg><span class="lb">system</span></div>
<div class="f" style="left:331px;top:594px"><svg class="ic" width="80" height="98" viewBox="0 0 80 98"><use href="#doc"/></svg><span class="lb">tailscale</span></div>
<div class="f" style="left:490px;top:594px"><svg class="ic" width="80" height="98" viewBox="0 0 80 98"><use href="#doc"/></svg><span class="lb">thermal</span></div>
<div class="f" style="left:649px;top:594px"><svg class="ic" width="80" height="98" viewBox="0 0 80 98"><use href="#doc"/></svg><span class="lb">tor</span></div>
<div class="f" style="left:808px;top:594px"><svg class="ic" width="80" height="98" viewBox="0 0 80 98"><use href="#doc"/></svg><span class="lb">ucitrack</span></div>
<div class="f" style="left:967px;top:594px"><svg class="ic" width="80" height="98" viewBox="0 0 80 98"><use href="#doc"/></svg><span class="lb">umount</span></div>
<div class="f" style="left:1126px;top:594px"><svg class="ic" width="80" height="98" viewBox="0 0 80 98"><use href="#doc"/></svg><span class="lb">urandom_seed</span></div>
<div class="f" style="left:1285px;top:594px"><svg class="ic" width="80" height="98" viewBox="0 0 80 98"><use href="#doc"/></svg><span class="lb">urngd</span></div>
<div class="f" style="left:1444px;top:594px"><svg class="ic" width="80" height="98" viewBox="0 0 80 98"><use href="#doc"/></svg><span class="lb">usbmode</span></div>
<div class="f" style="left:13px;top:723px"><svg class="ic" width="80" height="98" viewBox="0 0 80 98"><use href="#doc"/></svg><span class="lb">usbmuxd</span></div>
<div class="f" style="left:172px;top:723px"><svg class="ic" width="80" height="98" viewBox="0 0 80 98"><use href="#doc"/></svg><span class="lb">vpnpolicy</span></div>
<div class="f" style="left:331px;top:723px"><svg class="ic" width="80" height="98" viewBox="0 0 80 98"><use href="#doc"/></svg><span class="lb">vpnpolicy-apply</span></div>
<div class="f" style="left:490px;top:723px"><svg class="ic" width="80" height="98" viewBox="0 0 80 98"><use href="#doc"/></svg><span class="lb">vsftpd</span></div>
<div class="f" style="left:649px;top:723px"><svg class="ic" width="80" height="98" viewBox="0 0 80 98"><use href="#doc"/></svg><span class="lb">wdt</span></div>
<div class="f" style="left:808px;top:723px"><svg class="ic" width="80" height="98" viewBox="0 0 80 98"><use href="#doc"/></svg><span class="lb">webdav_ser</span></div>
<div class="f" style="left:967px;top:723px"><svg class="ic" width="80" height="98" viewBox="0 0 80 98"><use href="#doc"/></svg><span class="lb">wpad</span></div>
<div class="f" style="left:1126px;top:723px"><svg class="ic" width="80" height="98" viewBox="0 0 80 98"><use href="#doc"/></svg><span class="lb">zerotier</span></div>
<div id="floatbar">“nginx” selected&nbsp; (529 bytes)</div>
</div>
</div>
</body>
</html>
